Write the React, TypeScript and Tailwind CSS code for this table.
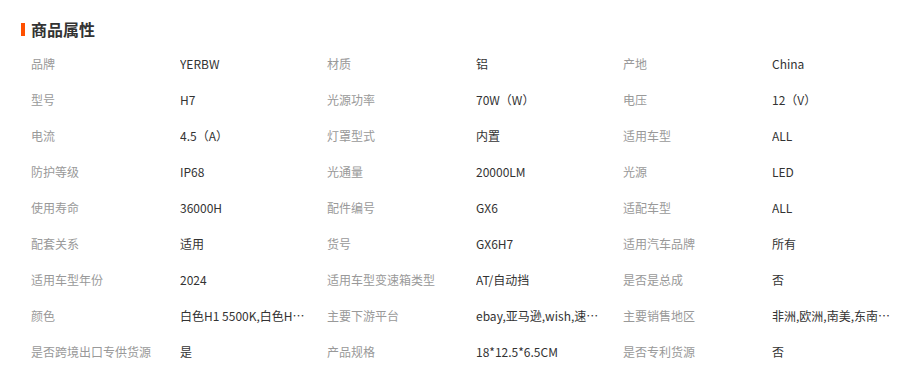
import React from 'react';

const rows: [string, string][][] = [
  [['品牌', 'YERBW'], ['材质', '铝'], ['产地', 'China']],
  [['型号', 'H7'], ['光源功率', '70W（W）'], ['电压', '12（V）']],
  [['电流', '4.5（A）'], ['灯罩型式', '内置'], ['适用车型', 'ALL']],
  [['防护等级', 'IP68'], ['光通量', '20000LM'], ['光源', 'LED']],
  [['使用寿命', '36000H'], ['配件编号', 'GX6'], ['适配车型', 'ALL']],
  [['配套关系', '适用'], ['货号', 'GX6H7'], ['适用汽车品牌', '所有']],
  [['适用车型年份', '2024'], ['适用车型变速箱类型', 'AT/自动挡'], ['是否是总成', '否']],
  [['颜色', '白色H1 5500K,白色H7 5500K'], ['主要下游平台', 'ebay,亚马逊,wish,速卖通'], ['主要销售地区', '非洲,欧洲,南美,东南亚,北美,中东']],
  [['是否跨境出口专供货源', '是'], ['产品规格', '18*12.5*6.5CM'], ['是否专利货源', '否']],
];

const App: React.FC = () => {
  return (
    <div className="w-[906px] h-[367px] bg-white overflow-hidden pt-[18px] font-['Noto_Sans_CJK_SC','Noto_Sans',sans-serif]">
      <div className="flex items-center h-[22px] pl-[21px]">
        <span className="w-[4px] h-[13px] bg-[#ff5000]" />
        <h2 className="ml-[6px] text-[16px] font-bold text-[#333] leading-none">商品属性</h2>
      </div>
      <div className="mt-[6px] pl-[31px]">
        {rows.map((row, i) => (
          <div key={i} className="flex h-[36px] items-center text-[12px]">
            {row.map(([label, value], j) => (
              <div key={j} className="flex w-[296px] shrink-0 items-center">
                <span className="w-[149px] shrink-0 text-[#999]">{label}</span>
                <span className="w-[128px] truncate text-[#333]">{value}</span>
              </div>
            ))}
          </div>
        ))}
      </div>
    </div>
  );
};

export default App;
